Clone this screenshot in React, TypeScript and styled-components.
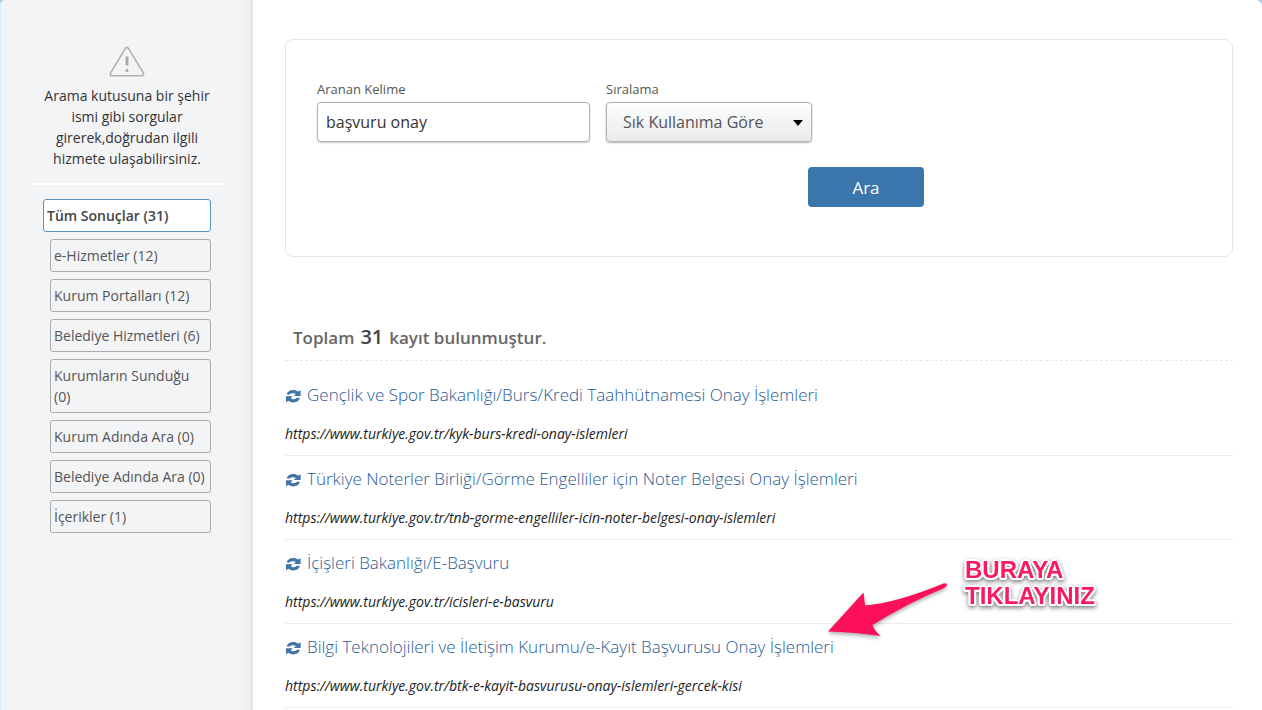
import React from "react";
import styled, { createGlobalStyle } from "styled-components";

const GlobalStyle = createGlobalStyle`
  * { box-sizing: border-box; }
  body {
    margin: 0;
    background: #a9cdea;
    font-family: "Open Sans", "Noto Sans", sans-serif;
    font-size: 14px;
    line-height: 21px;
    color: #333;
  }
`;

const Page = styled.div`
  position: relative;
  display: flex;
  height: 100vh;
  overflow: hidden;
  border-radius: 6px 6px 0 0;
  background: #fff;
`;

const Sidebar = styled.aside`
  flex: 0 0 253px;
  padding: 46px 28px 0;
  background: linear-gradient(to left, #e2e4e6 0, #eeeff1 4px, #f3f4f6 10px);
  border-left: 1px solid #dcecf8;
`;

const Hint = styled.div`
  display: flex;
  flex-direction: column;
  align-items: center;
  padding: 0 10px 14px;
  border-bottom: 2px solid #fff;
  text-align: center;
`;

const HintText = styled.p`
  margin: 8px 0 0;
`;

const Filters = styled.nav`
  display: flex;
  flex-direction: column;
  gap: 7px;
  padding: 14px 14px 0 21px;
`;

const FilterLink = styled.a<{ $active?: boolean }>`
  display: block;
  padding: 5px 3px;
  margin-left: ${(p) => (p.$active ? "-7px" : "0")};
  border: 1px solid ${(p) => (p.$active ? "#5a93c0" : "#a9abad")};
  border-radius: 3px;
  background: ${(p) => (p.$active ? "#fff" : "transparent")};
  color: ${(p) => (p.$active ? "#444" : "#555")};
  font-weight: ${(p) => (p.$active ? 600 : 400)};
  text-decoration: none;
`;

const Main = styled.main`
  flex: 1;
  min-width: 0;
  padding: 39px 29px 0 32px;
`;

const SearchForm = styled.form`
  min-height: 218px;
  padding: 39px 31px 48px;
  border: 1px solid #e6e6e6;
  border-radius: 8px;
`;

const FormBody = styled.div`
  display: flex;
  flex-direction: column;
  gap: 25px;
  max-width: 607px;
`;

const Fields = styled.div`
  display: flex;
  gap: 16px;
`;

const Field = styled.div<{ $width: number }>`
  display: flex;
  flex-direction: column;
  gap: 2px;
  width: ${(p) => p.$width}px;
`;

const Label = styled.label`
  font-size: 13px;
  color: #555;
`;

const TextInput = styled.input`
  height: 40px;
  padding: 0 8px;
  border: 1px solid #b3b3b3;
  border-radius: 4px;
  box-shadow: 0 1px 2px rgba(0, 0, 0, 0.2);
  background: #fff;
  font: inherit;
  font-size: 16px;
  color: #333;
`;

const SelectBox = styled.div`
  position: relative;
  display: flex;
`;

const Select = styled.select`
  flex: 1;
  height: 40px;
  padding: 0 32px 0 16px;
  appearance: none;
  border: 1px solid #b3b3b3;
  border-radius: 4px;
  box-shadow: 0 1px 2px rgba(0, 0, 0, 0.3);
  background: linear-gradient(#fefefe, #e8eaeb);
  font: inherit;
  font-size: 16px;
  color: #555;
`;

const Caret = styled.svg`
  position: absolute;
  right: 9px;
  top: 18px;
  pointer-events: none;
`;

const SubmitButton = styled.button`
  align-self: flex-end;
  width: 116px;
  height: 40px;
  border: 0;
  border-radius: 4px;
  background: #3a76ac;
  font: inherit;
  font-size: 17px;
  color: #fff;
`;

const Summary = styled.h2`
  display: flex;
  align-items: baseline;
  gap: 6px;
  margin: 66px 0 0;
  padding: 0 8px 8px;
  border-bottom: 1px dashed #e8e8e8;
  font-size: 17px;
  line-height: 28px;
  font-weight: 600;
  color: #666;
`;

const Count = styled.strong`
  font-size: 20px;
  font-weight: 600;
  color: #444;
`;

const Results = styled.ul`
  margin: 0;
  padding: 11px 0 0;
  list-style: none;
`;

const Result = styled.li`
  padding: 11px 0;
  border-bottom: 1px solid #ececec;
`;

const ResultLink = styled.a`
  display: flex;
  align-items: center;
  gap: 6px;
  font-size: 17px;
  font-weight: 300;
  line-height: 24px;
  color: #1f5c94;
  text-decoration: none;
`;

const ResultUrl = styled.cite`
  display: block;
  margin-top: 16px;
  color: #222;
`;

const Callout = styled.div`
  position: absolute;
  left: 824px;
  top: 556px;
  display: flex;
  pointer-events: none;
`;

const CalloutText = styled.strong`
  margin: 1px 0 0 11px;
  font: 700 24px/26px "Liberation Sans", Arial, sans-serif;
  color: #fb1a60;
  text-shadow:
    2px 0 #fff, -2px 0 #fff, 0 2px #fff, 0 -2px #fff,
    1px 1px #fff, -1px 1px #fff, 1px -1px #fff, -1px -1px #fff,
    2px 1px #fff, -2px 1px #fff, 1px 2px #fff, -1px 2px #fff;
  filter: drop-shadow(0 2px 2px rgba(0, 0, 0, 0.5));
`;

const ArrowShape = styled.path`
  fill: #fc1059;
  filter: drop-shadow(0 2px 2px rgba(0, 0, 0, 0.35));
`;

const filters = [
  "Tüm Sonuçlar (31)",
  "e-Hizmetler (12)",
  "Kurum Portalları (12)",
  "Belediye Hizmetleri (6)",
  "Kurumların Sunduğu (0)",
  "Kurum Adında Ara (0)",
  "Belediye Adında Ara (0)",
  "İçerikler (1)",
];

const results = [
  {
    title: "Gençlik ve Spor Bakanlığı/Burs/Kredi Taahhütnamesi Onay İşlemleri",
    url: "https://www.turkiye.gov.tr/kyk-burs-kredi-onay-islemleri",
  },
  {
    title: "Türkiye Noterler Birliği/Görme Engelliler için Noter Belgesi Onay İşlemleri",
    url: "https://www.turkiye.gov.tr/tnb-gorme-engelliler-icin-noter-belgesi-onay-islemleri",
  },
  {
    title: "İçişleri Bakanlığı/E-Başvuru",
    url: "https://www.turkiye.gov.tr/icisleri-e-basvuru",
  },
  {
    title: "Bilgi Teknolojileri ve İletişim Kurumu/e-Kayıt Başvurusu Onay İşlemleri",
    url: "https://www.turkiye.gov.tr/btk-e-kayit-basvurusu-onay-islemleri-gercek-kisi",
  },
];

const WarningIcon = () => (
  <svg width="36" height="31" viewBox="0 0 36 31" fill="none" aria-hidden="true">
    <path
      d="M16.4 2.4Q18 .4 19.4 2.4L34.3 26.8Q35.4 29.6 32.8 29.8H3Q.5 29.6 1.6 26.8Z"
      stroke="#b0b1b3"
      strokeWidth="1.6"
    />
    <path d="M18 10.5v9" stroke="#a6a7a9" strokeWidth="2.8" />
    <circle cx="18" cy="24.5" r="1.5" fill="#a6a7a9" />
  </svg>
);

const RefreshIcon = () => (
  <svg width="16" height="16" viewBox="0 0 16 16" fill="#3f74a4" aria-hidden="true">
    <path d="M1.6 7.6C2.4 4.6 5 3 8.2 3C10.2 3 11.8 3.6 13 4.6L15.6 3.2V9H8.8L10.8 7.2C10 6.4 9 6.2 8 6.2C6.4 6.2 5.4 6.7 4.6 7.6Z" />
    <path d="M15 10.8C14.2 13.8 11.6 15.4 8.4 15.4C6.4 15.4 4.8 14.8 3.6 13.8L1 15.2V9.2H7.8L5.8 11.2C6.6 12 7.6 12.2 8.6 12.2C10.2 12.2 11.2 11.7 12 10.8Z" />
  </svg>
);

export default function App() {
  return (
    <>
      <GlobalStyle />
      <Page>
        <Sidebar>
          <Hint>
            <WarningIcon />
            <HintText>
              Arama kutusuna bir şehir ismi gibi sorgular girerek,doğrudan ilgili hizmete
              ulaşabilirsiniz.
            </HintText>
          </Hint>
          <Filters>
            {filters.map((label, i) => (
              <FilterLink key={label} href="#" $active={i === 0}>
                {label}
              </FilterLink>
            ))}
          </Filters>
        </Sidebar>
        <Main>
          <SearchForm>
            <FormBody>
              <Fields>
                <Field $width={273}>
                  <Label htmlFor="keyword">Aranan Kelime</Label>
                  <TextInput id="keyword" defaultValue="başvuru onay" />
                </Field>
                <Field $width={206}>
                  <Label htmlFor="order">Sıralama</Label>
                  <SelectBox>
                    <Select id="order">
                      <option>Sık Kullanıma Göre</option>
                    </Select>
                    <Caret width="10" height="6" viewBox="0 0 10 6">
                      <path d="M0 0h10L5 6z" />
                    </Caret>
                  </SelectBox>
                </Field>
              </Fields>
              <SubmitButton type="button">Ara</SubmitButton>
            </FormBody>
          </SearchForm>
          <Summary>
            Toplam <Count>31</Count> kayıt bulunmuştur.
          </Summary>
          <Results>
            {results.map((r) => (
              <Result key={r.url}>
                <ResultLink href={r.url}>
                  <RefreshIcon />
                  {r.title}
                </ResultLink>
                <ResultUrl>{r.url}</ResultUrl>
              </Result>
            ))}
          </Results>
        </Main>
        <Callout>
          <svg width="130" height="90" viewBox="0 0 130 90" aria-hidden="true">
            <ArrowShape d="M4 75.5L39.5 36.5L41 49.5Q72 47 119.5 27.5Q123 26.5 123 29.5Q122 31 119 32.5Q84 47 48.5 69Q50 74 56.5 80Q30 76 4 75.5Z" />
          </svg>
          <CalloutText>
            BURAYA
            <br />
            TIKLAYINIZ
          </CalloutText>
        </Callout>
      </Page>
    </>
  );
}
